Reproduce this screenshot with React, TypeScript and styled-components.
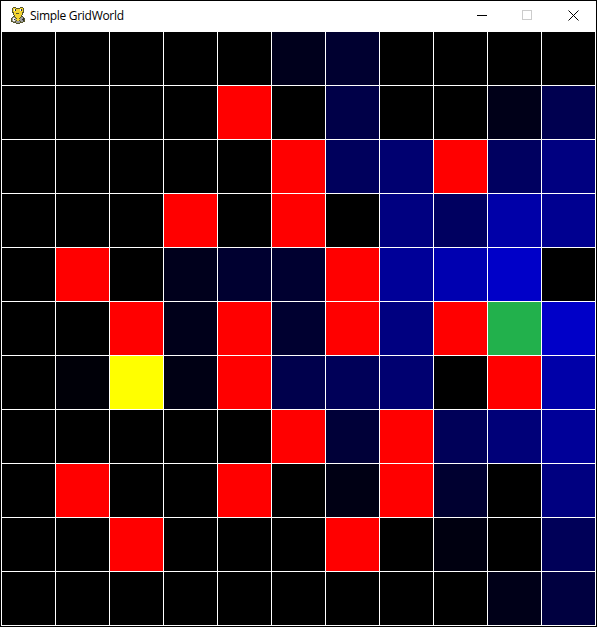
import React from 'react'
import styled, { createGlobalStyle } from 'styled-components'

const GlobalStyle = createGlobalStyle`
  html, body {
    margin: 0;
    padding: 0;
    background: #000000;
  }
`

const StyledWindow = styled.div`
  box-sizing: border-box;
  width: 597px;
  height: 627px;
  border: 1px solid #000000;
  background-color: #ffffff;
  display: flex;
  flex-direction: column;
`

const StyledTitleBar = styled.div`
  display: flex;
  align-items: flex-start;
  height: 31px;
  flex-shrink: 0;
`

const StyledAppIcon = styled.svg`
  width: 16px;
  height: 17px;
  margin: 6px 0 0 9px;
  flex-shrink: 0;
`

const StyledTitle = styled.span`
  margin: 6px 0 0 4px;
  flex: 1;
  font-family: 'Open Sans', 'Noto Sans', sans-serif;
  font-size: 12px;
  line-height: 18px;
  letter-spacing: -0.3px;
  color: #000000;
`

const StyledWinButton = styled.div<{ $inset: number }>`
  box-sizing: border-box;
  width: 46px;
  height: 30px;
  display: flex;
  padding: 9px 0 0 ${({ $inset }) => $inset}px;
`

const StyledGrid = styled.div`
  display: grid;
  grid-template-columns: repeat(11, 53px);
  grid-auto-rows: 53px;
  gap: 1px;
  padding: 0 1px 1px 1px;
`

const StyledCell = styled.div<{ $color: string }>`
  background-color: ${({ $color }) => $color};
`

const R = '#ff0000'
const Y = '#ffff00'
const G = '#22b14c'
const b = (v: number) => `rgb(0, 0, ${v})`

const cells: (string | number)[][] = [
  [0, 0, 0, 0, 0, 28, 48, 0, 0, 0, 0],
  [0, 0, 0, 0, R, 0, 72, 0, 0, 24, 80],
  [0, 0, 0, 0, 0, R, 92, 112, R, 96, 128],
  [0, 0, 0, R, 0, R, 0, 128, 96, 168, 144],
  [0, R, 0, 28, 48, 48, R, 152, 176, 200, 0],
  [0, 0, R, 26, R, 48, R, 128, R, G, 200],
  [0, 8, Y, 20, R, 76, 88, 112, 0, R, 168],
  [0, 0, 0, 0, 0, R, 56, R, 88, 120, 152],
  [0, R, 0, 0, R, 0, 20, R, 48, 0, 128],
  [0, 0, R, 0, 0, 0, R, 0, 16, 0, 88],
  [0, 0, 0, 0, 0, 0, 0, 0, 0, 24, 64],
]

// pygame snake icon, pixel by pixel
const iconRows = [
  '...ooo....ooo...',
  '..oyyyooooyyyo..',
  '..oywkyyyywkyo..',
  '..oywkyyyywkyo..',
  '..oyyyyyyyyyyo..',
  '..ooyyyyyyyyoo..',
  '...oyyoooyyyo...',
  '...oyyyyyyyyo...',
  '....oyyyyyyo....',
  '...ooyyyyyyoo...',
  '..oggoyyyyoggo..',
  '.ogwwgoyyogggko.',
  '.ogwkgyyyyggkko.',
  '.ogwwgoyyogggko.',
  '.ooggoggggoggoo.',
  '...oooggggooo...',
  '......oooo......',
]

const iconColors: Record<string, string> = {
  o: '#55552a',
  y: '#f2d331',
  w: '#f6f6f6',
  k: '#303030',
  g: '#9a9a9a',
}

const App: React.FC = () => {
  return (
    <StyledWindow>
      <GlobalStyle />
      <StyledTitleBar>
        <StyledAppIcon viewBox="0 0 16 17" shapeRendering="crispEdges">
          {iconRows.map((row, y) =>
            row.split('').map((c, x) =>
              iconColors[c] ? <rect key={`${x}-${y}`} x={x} y={y} width="1" height="1" fill={iconColors[c]} /> : null
            )
          )}
        </StyledAppIcon>
        <StyledTitle>Simple GridWorld</StyledTitle>
        <StyledWinButton $inset={19}>
          <svg width="10" height="10" viewBox="0 0 10 10" shapeRendering="crispEdges">
            <rect x="0" y="5" width="10" height="1" fill="#000000" />
          </svg>
        </StyledWinButton>
        <StyledWinButton $inset={18}>
          <svg width="10" height="10" viewBox="0 0 10 10" shapeRendering="crispEdges">
            <rect x="0.5" y="0.5" width="9" height="9" fill="none" stroke="#cccccc" />
          </svg>
        </StyledWinButton>
        <StyledWinButton $inset={18}>
          <svg width="11" height="11" viewBox="0 0 11 11">
            <path d="M0.5 0.5L10.5 10.5M10.5 0.5L0.5 10.5" stroke="#000000" strokeWidth="1" fill="none" />
          </svg>
        </StyledWinButton>
      </StyledTitleBar>
      <StyledGrid>
        {cells.flat().map((c, i) => (
          <StyledCell key={i} $color={typeof c === 'number' ? b(c) : c} />
        ))}
      </StyledGrid>
    </StyledWindow>
  )
}

export default App
